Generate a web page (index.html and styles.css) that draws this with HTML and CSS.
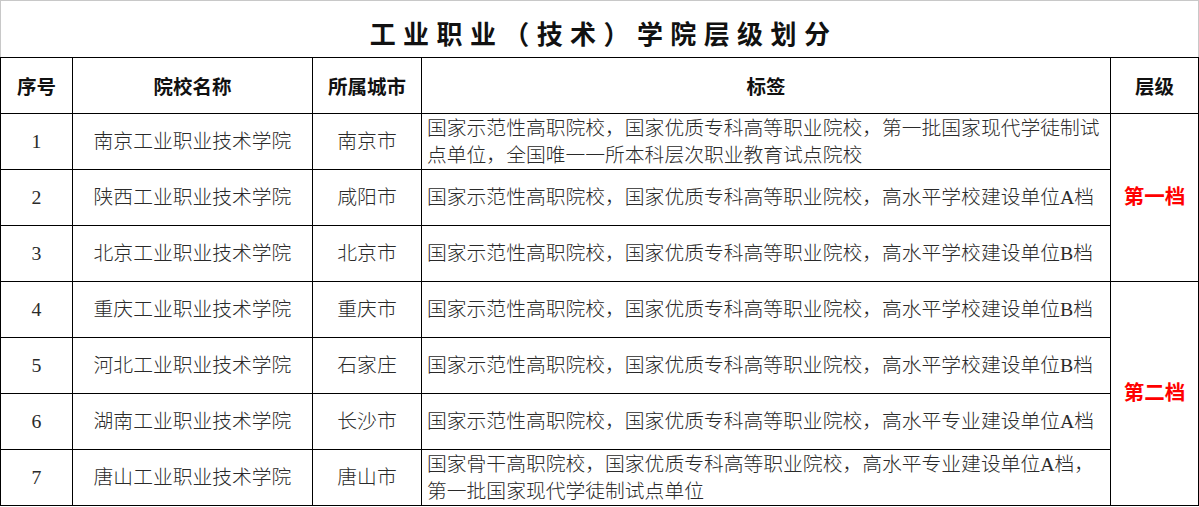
FILE: index.html
```html
<!DOCTYPE html>
<html lang="zh-CN">
<head>
<meta charset="utf-8">
<title>工业职业（技术）学院层级划分</title>
<link rel="stylesheet" href="styles.css">
</head>
<body>
<table class="sheet">
  <colgroup>
    <col class="c-no">
    <col class="c-name">
    <col class="c-city">
    <col class="c-tag">
    <col class="c-level">
  </colgroup>
  <thead>
    <tr class="title-row"><th colspan="5" class="title">工业职业（技术）学院层级划分</th></tr>
    <tr class="head-row">
      <th>序号</th><th>院校名称</th><th>所属城市</th><th>标签</th><th>层级</th>
    </tr>
  </thead>
  <tbody>
    <tr>
      <td class="ctr">1</td><td class="ctr">南京工业职业技术学院</td><td class="ctr">南京市</td>
      <td class="tag">国家示范性高职院校，国家优质专科高等职业院校，第一批国家现代学徒制试点单位，全国唯一一所本科层次职业教育试点院校</td>
      <td class="level" rowspan="3">第一档</td>
    </tr>
    <tr>
      <td class="ctr">2</td><td class="ctr">陕西工业职业技术学院</td><td class="ctr">咸阳市</td>
      <td class="tag">国家示范性高职院校，国家优质专科高等职业院校，高水平学校建设单位A档</td>
    </tr>
    <tr>
      <td class="ctr">3</td><td class="ctr">北京工业职业技术学院</td><td class="ctr">北京市</td>
      <td class="tag">国家示范性高职院校，国家优质专科高等职业院校，高水平学校建设单位B档</td>
    </tr>
    <tr>
      <td class="ctr">4</td><td class="ctr">重庆工业职业技术学院</td><td class="ctr">重庆市</td>
      <td class="tag">国家示范性高职院校，国家优质专科高等职业院校，高水平学校建设单位B档</td>
      <td class="level" rowspan="4">第二档</td>
    </tr>
    <tr>
      <td class="ctr">5</td><td class="ctr">河北工业职业技术学院</td><td class="ctr">石家庄</td>
      <td class="tag">国家示范性高职院校，国家优质专科高等职业院校，高水平学校建设单位B档</td>
    </tr>
    <tr>
      <td class="ctr">6</td><td class="ctr">湖南工业职业技术学院</td><td class="ctr">长沙市</td>
      <td class="tag">国家示范性高职院校，国家优质专科高等职业院校，高水平专业建设单位A档</td>
    </tr>
    <tr>
      <td class="ctr">7</td><td class="ctr">唐山工业职业技术学院</td><td class="ctr">唐山市</td>
      <td class="tag">国家骨干高职院校，国家优质专科高等职业院校，高水平专业建设单位A档，第一批国家现代学徒制试点单位</td>
    </tr>
  </tbody>
</table>
</body>
</html>
```

FILE: styles.css
```css
html, body {
  margin: 0;
  padding: 0;
  background: #ffffff;
}

.sheet {
  border-collapse: collapse;
  table-layout: fixed;
  width: 1198px;
  font-family: "Liberation Serif", "Noto Sans CJK SC", serif;
  color: #2a2a2a;
}

.c-no { width: 72px; }
.c-name { width: 240px; }
.c-city { width: 109px; }
.c-tag { width: 689px; }
.c-level { width: 88px; }

.sheet th,
.sheet td {
  border: 1px solid #000000;
  padding: 0;
}

.title-row th.title {
  height: 50px;
  border-top: 1px solid #c8c8c8;
  border-left: 1px solid #c8c8c8;
  border-right: 1px solid #c8c8c8;
  border-bottom: 1px solid #000000;
  font-size: 26px;
  font-weight: 700;
  letter-spacing: 7.4px;
  text-indent: 8px;
  color: #111111;
  text-align: center;
  vertical-align: middle;
  padding-top: 6px;
}

.head-row th {
  height: 55px;
  font-size: 19.5px;
  font-weight: 700;
  color: #111111;
  text-align: center;
  vertical-align: middle;
}

.sheet tbody td {
  height: 55px;
  font-size: 19.8px;
  font-weight: 300;
  line-height: 27px;
  vertical-align: middle;
}

.ctr {
  text-align: center;
}

.tag {
  text-align: left;
  padding-left: 5px !important;
  padding-right: 2px !important;
}

.level {
  text-align: center;
  color: #ff0000;
  font-weight: 700 !important;
  font-size: 20.5px !important;
}
```
